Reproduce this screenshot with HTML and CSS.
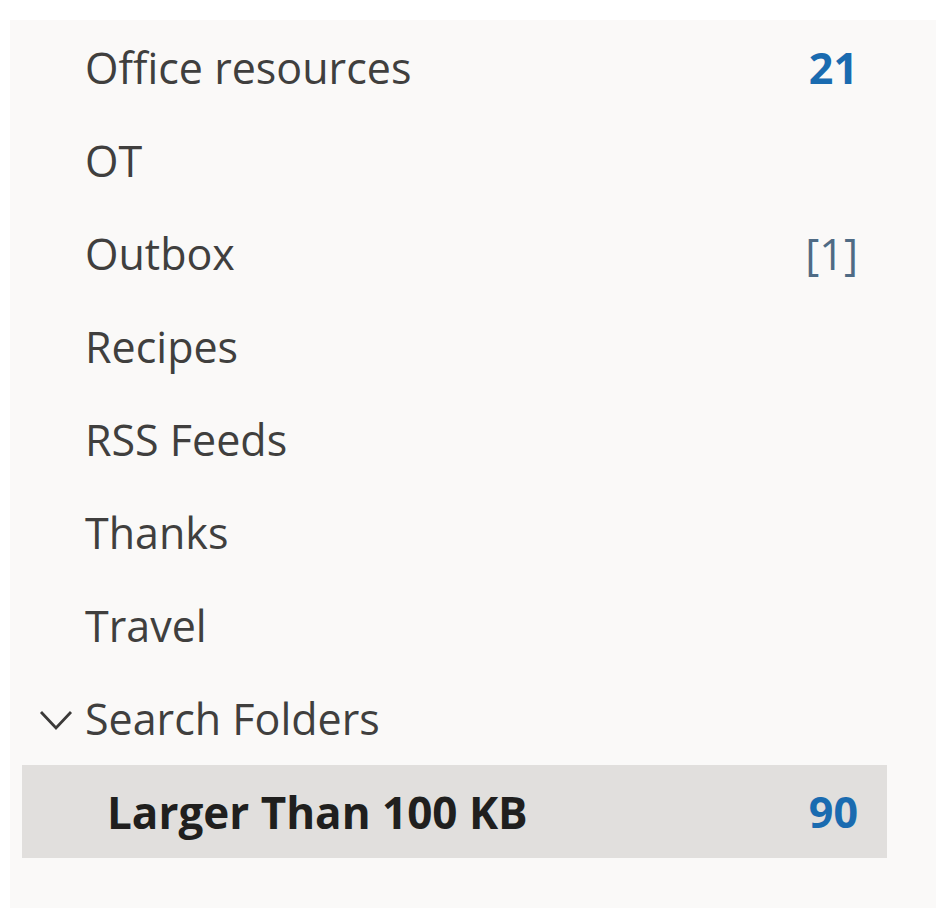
FILE: index.html
```html
<!DOCTYPE html>
<html>

<head>
    <title>Folders</title>
    <link rel="stylesheet" href="styles.css">
</head>

<body>
    <div class="pane">
        <ul class="folders">
            <li class="folder">
                <span class="name">Office resources</span>
                <span class="count unread">21</span>
            </li>
            <li class="folder"><span class="name">OT</span></li>
            <li class="folder">
                <span class="name">Outbox</span>
                <span class="count pending">[1]</span>
            </li>
            <li class="folder"><span class="name">Recipes</span></li>
            <li class="folder"><span class="name">RSS Feeds</span></li>
            <li class="folder"><span class="name">Thanks</span></li>
            <li class="folder"><span class="name">Travel</span></li>
            <li class="folder group">
                <svg class="chevron" viewBox="0 0 34 22" width="34" height="22">
                    <path d="M2 3 L17 19 L32 3" fill="none" stroke="#3b3a39" stroke-width="2.8" />
                </svg>
                <span class="name">Search Folders</span>
            </li>
            <li class="folder child selected">
                <span class="name">Larger Than 100 KB</span>
                <span class="count unread">90</span>
            </li>
        </ul>
    </div>
</body>

</html>
```

FILE: styles.css
```css
* {
    margin: 0;
    padding: 0;
    box-sizing: border-box;
}

body {
    background: #ffffff;
    font-family: "Open Sans", "Noto Sans", sans-serif;
    height: 908px;
    overflow: hidden;
}

.pane {
    margin: 20px 0 0 10px;
    height: 888px;
    background: #faf9f8;
    padding: 1px 0 0 12px;
}

.folders {
    list-style: none;
    width: 865px;
}

.folder {
    display: flex;
    align-items: center;
    height: 93px;
    padding: 0 29px 0 63px;
    font-size: 43px;
    color: #403f3e;
    position: relative;
}

.folder .name {
    flex: 1;
}

.folder.group .chevron {
    position: absolute;
    left: 17px;
    top: 37px;
}

.folder.child {
    padding-left: 85px;
}

.folder.selected {
    background: #e1dfdd;
}

.folder.selected .name {
    font-weight: 700;
    font-size: 44px;
    color: #201f1e;
}

.count {
    font-size: 43px;
}

.count.unread {
    font-weight: 700;
    color: #1a6bb0;
}

.count.pending {
    color: #4f6b85;
}
```
